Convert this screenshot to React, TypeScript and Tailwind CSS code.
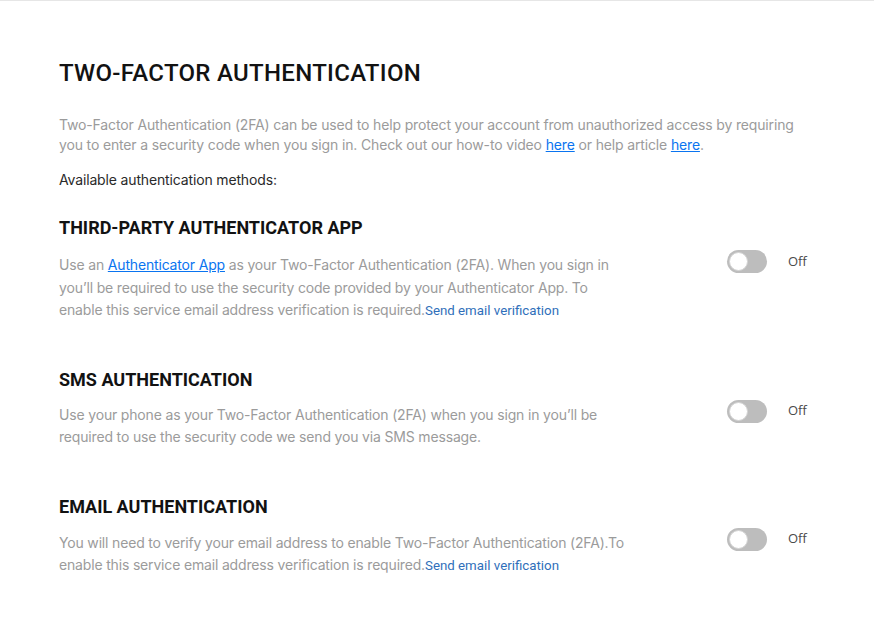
import React from 'react';

const Toggle: React.FC = () => (
  <div className="flex items-center gap-[21px] -mt-[4px]">
    <div className="relative h-[23px] w-[40px] rounded-full bg-[#bdbdbd]">
      <div className="absolute left-[2px] top-[2px] h-[19px] w-[19px] rounded-full border border-[#d4d4d4] bg-white" />
    </div>
    <span className="text-[13px] text-[#4a4a4a] [font-family:'Open_Sans',sans-serif]">Off</span>
  </div>
);

const SendLink: React.FC = () => (
  <a href="#" className="text-[13.3px] tracking-normal text-[#2f6fba] [font-family:Roboto,sans-serif]">
    Send email verification
  </a>
);

const App: React.FC = () => {
  const methods = [
    {
      title: 'THIRD-PARTY AUTHENTICATOR APP',
      body: (
        <>
          Use an{' '}
          <a href="#" className="text-[#0a74f0] underline">
            Authenticator App
          </a>{' '}
          as your Two-Factor Authentication (2FA). When you sign in
          <br />
          you’ll be required to use the security code provided by your Authenticator App. To
          <br />
          enable this service email address verification is required.
          <SendLink />
        </>
      ),
      headMt: 'mt-[26px]',
      bodyMt: 'mt-[14px]',
    },
    {
      title: 'SMS AUTHENTICATION',
      body: (
        <>
          Use your phone as your Two-Factor Authentication (2FA) when you sign in you’ll be
          <br />
          required to use the security code we send you via SMS message.
        </>
      ),
      headMt: 'mt-[45px]',
      bodyMt: 'mt-[12px]',
    },
    {
      title: 'EMAIL AUTHENTICATION',
      body: (
        <>
          You will need to verify your email address to enable Two-Factor Authentication (2FA).To
          <br />
          enable this service email address verification is required.
          <SendLink />
        </>
      ),
      headMt: 'mt-[46px]',
      bodyMt: 'mt-[13px]',
    },
  ];

  return (
    <div className="min-h-[635px] w-[874px] border-t border-[#e6e6e6] bg-white [font-family:Inter,sans-serif]">
      <div className="pl-[59px] pt-[56px]">
        <h1 className="text-[24px] leading-[32px] font-medium tracking-[0.3px] text-[#121212] [font-family:Roboto,sans-serif]">
          TWO-FACTOR AUTHENTICATION
        </h1>
        <p className="mt-[26px] w-[760px] text-[14px] leading-[20px] tracking-[-0.15px] text-[#9b9b9b]">
          Two-Factor Authentication (2FA) can be used to help protect your account from unauthorized access by requiring
          <br />
          you to enter a security code when you sign in. Check out our how-to video{' '}
          <a href="#" className="text-[#0a74f0] underline">here</a> or help article{' '}
          <a href="#" className="text-[#0a74f0] underline">here</a>.
        </p>
        <p className="mt-[15px] text-[14px] leading-[20px] tracking-[-0.15px] text-[#2a2a2a]">
          Available authentication methods:
        </p>

        {methods.map((m) => (
          <section key={m.title}>
            <h2 className={`${m.headMt} text-[18px] leading-[24px] font-bold text-[#121212] [font-family:Roboto,sans-serif]`}>
              {m.title}
            </h2>
            <div className={`${m.bodyMt} flex items-start`}>
              <p className="w-[668px] text-[14px] leading-[22.5px] tracking-[-0.17px] text-[#9b9b9b]">{m.body}</p>
              <Toggle />
            </div>
          </section>
        ))}
      </div>
    </div>
  );
};

export default App;
